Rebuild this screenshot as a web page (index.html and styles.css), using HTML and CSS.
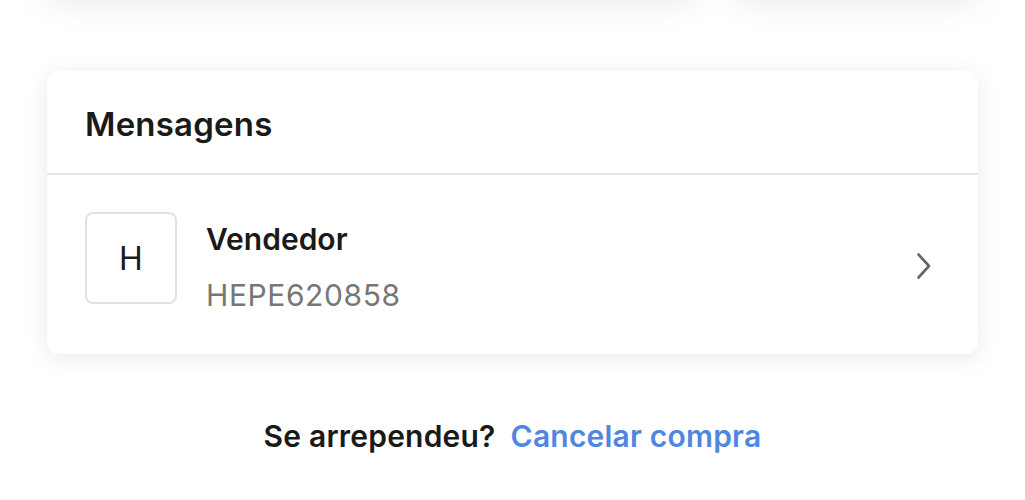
FILE: index.html
```html
<!DOCTYPE html>
<html lang="pt">
<head>
<meta charset="utf-8">
<link rel="stylesheet" href="styles.css">
</head>
<body>
<div class="page">
  <div class="top-row">
    <div class="top-card top-card-left"></div>
    <div class="top-card top-card-right"></div>
  </div>
  <section class="card">
    <header class="card-header">
      <h2 class="card-title">Mensagens</h2>
    </header>
    <div class="msg-row">
      <div class="avatar">H</div>
      <div class="msg-info">
        <div class="msg-name">Vendedor</div>
        <div class="msg-id">HEPE620858</div>
      </div>
      <svg class="chevron" width="16" height="28" viewBox="0 0 16 28" aria-hidden="true">
        <path d="M2.5 2.5 L13 14 L2.5 25.5" fill="none" stroke="#666" stroke-width="2.6" stroke-linecap="round" stroke-linejoin="round"/>
      </svg>
    </div>
  </section>
  <p class="regret"><span>Se arrependeu?</span><a class="cancel" href="#">Cancelar compra</a></p>
</div>
</body>
</html>
```

FILE: styles.css
```css
* { box-sizing: border-box; }
html, body {
  margin: 0;
  padding: 0;
  background: #fff;
  font-family: "Inter", "Liberation Sans", sans-serif;
  overflow: hidden;
}
.page {
  width: 1025px;
  height: 500px;
  padding: 0 47px;
  overflow: hidden;
}
.top-row {
  display: flex;
  gap: 40px;
  height: 60px;
  margin-top: -70px;
}
.top-card {
  background: #fff;
  border-radius: 12px;
  height: 60px;
  box-shadow: 0 6px 38px rgba(0,0,0,0.13);
}
.top-card-left { flex: 0 0 650px; }
.top-card-right { flex: 1 1 auto; }
.card {
  margin-top: 81px;
  background: #fff;
  border-radius: 12px;
  box-shadow: 0 4px 24px rgba(0,0,0,0.09);
  height: 283px;
}
.card-header {
  height: 104px;
  border-bottom: 2px solid #e4e4e4;
  display: flex;
  align-items: center;
  padding: 4px 38px 0;
}
.card-title {
  margin: 0;
  font-size: 33px;
  font-weight: 600;
  color: #1a1a1a;
  letter-spacing: 0.2px;
}
.msg-row {
  display: flex;
  align-items: flex-start;
  padding: 37px 46px 0 38px;
}
.avatar {
  width: 92px;
  height: 92px;
  border: 2px solid #e2e2e2;
  border-radius: 8px;
  display: flex;
  align-items: center;
  justify-content: center;
  font-size: 32px;
  font-weight: 400;
  color: #1a1a1a;
}
.msg-info {
  flex: 1;
  margin-left: 29px;
  margin-top: 9px;
  display: flex;
  flex-direction: column;
  gap: 20px;
}
.msg-name {
  font-size: 30px;
  font-weight: 600;
  color: #1a1a1a;
  line-height: 36px;
}
.msg-id {
  font-size: 30px;
  font-weight: 400;
  color: #777;
  line-height: 36px;
  letter-spacing: 0.6px;
}
.chevron {
  display: block;
  margin-top: 40px;
}
.regret {
  margin: 64px 0 0;
  display: flex;
  justify-content: center;
  gap: 15px;
  font-size: 30px;
  font-weight: 600;
  color: #1a1a1a;
  letter-spacing: 0.2px;
}
.cancel {
  color: #4f86e0;
  text-decoration: none;
}
```
